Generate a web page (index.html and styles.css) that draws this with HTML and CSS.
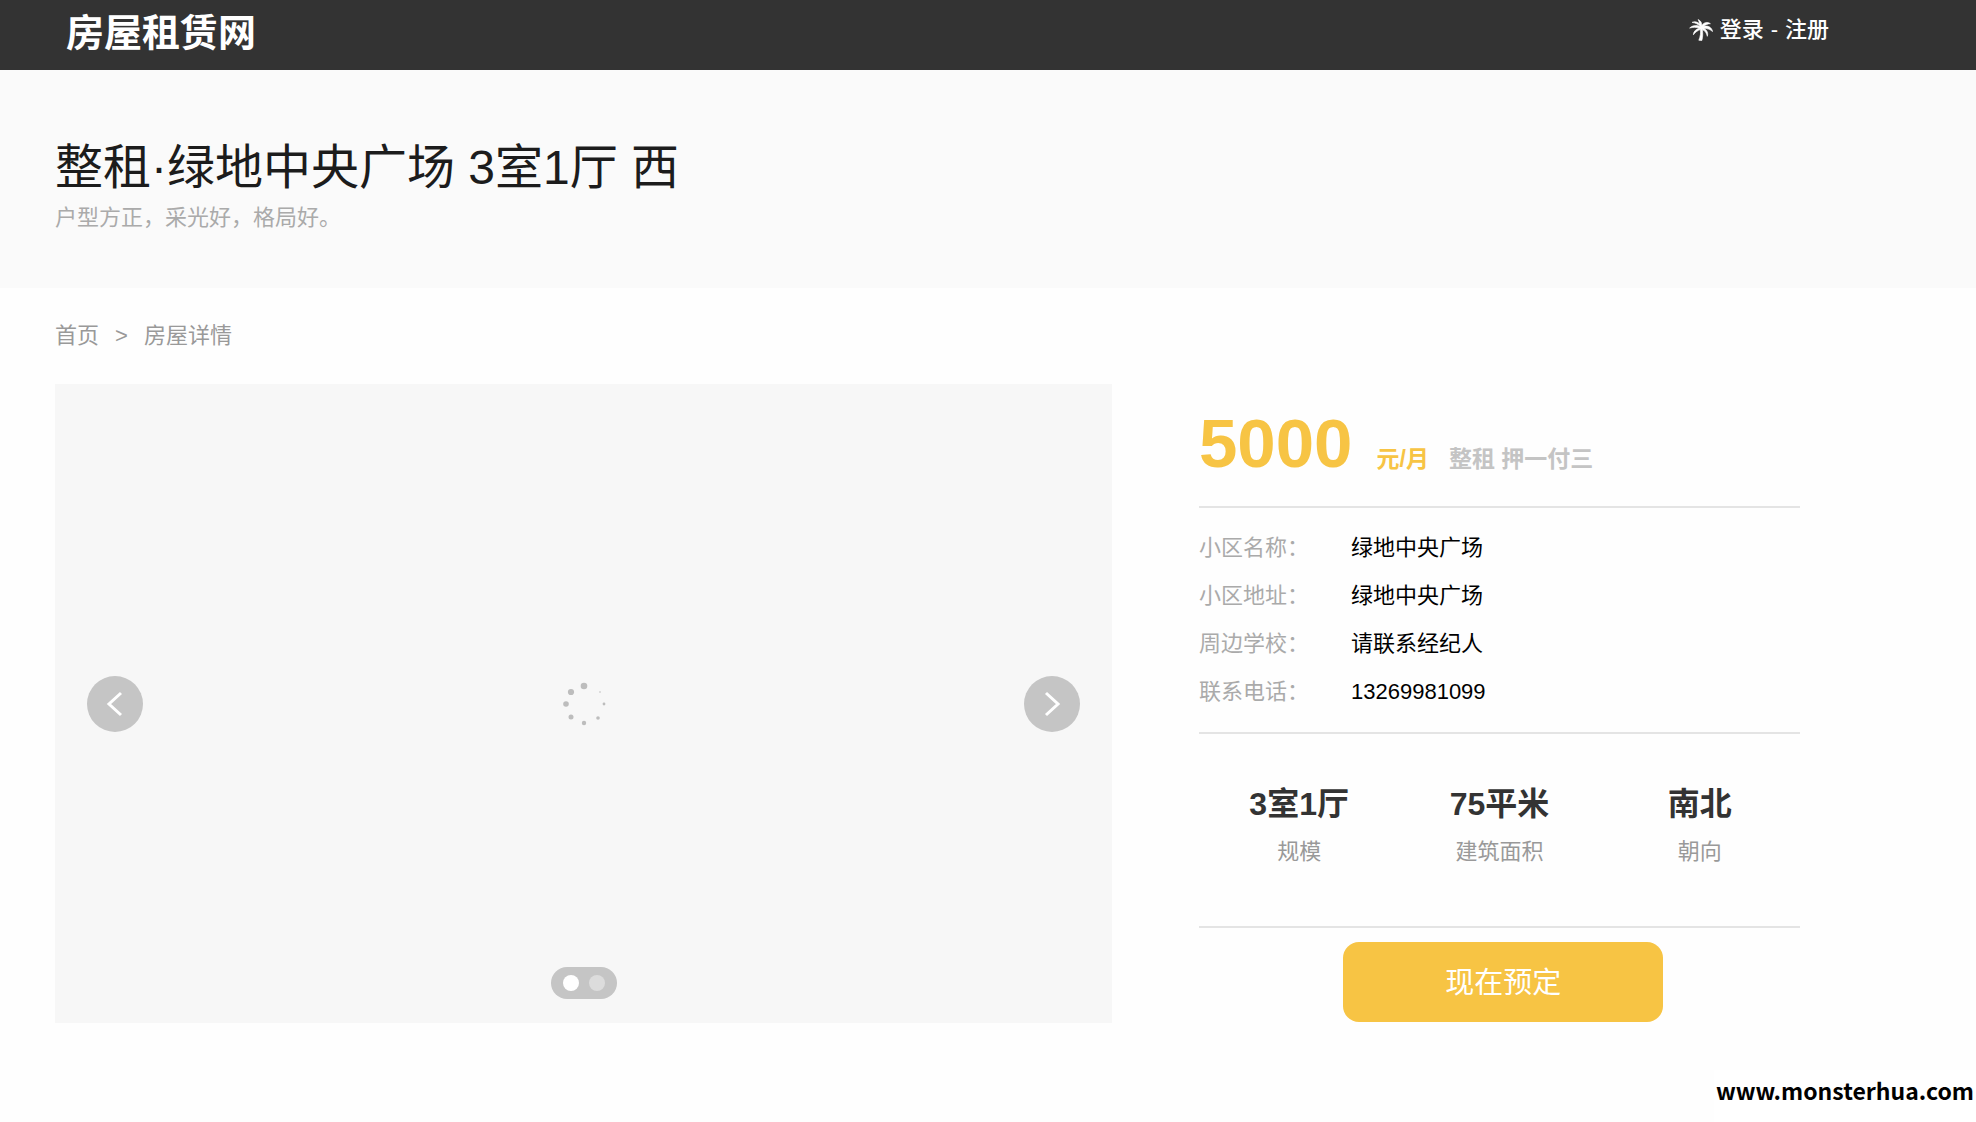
FILE: index.html
```html
<!DOCTYPE html>
<html lang="zh-CN">
  <head>
    <meta charset="UTF-8" />
    <meta name="viewport" content="width=device-width, initial-scale=1.0" />
    <title>房屋租赁网</title>
    <link rel="stylesheet" href="styles.css">
  </head>
  <body>
    <header class="header">
      <a class="logo" href="#">房屋租赁网</a>
      <div class="user">
        <svg class="palm" viewBox="0 0 22 20" aria-hidden="true">
          <path d="M10.6 7.2C8.4 5.6 4 5 .6 8.2c3.2-.9 6-.8 9.2.2C6.6 9 4.2 11 4 14.4c2-2.600 4-4 6.400-4.800C11 12.400 10.400 16 9 19.400l2.800.2c.9-3.400 1-6.800.4-10 2.400 1 4 3.200 4.600 6.200 1-3.200-.4-5.800-3-7 3.400-.4 5.600.8 7.800 2.600C21 7.600 17 5.400 13.400 6.800 15.200 5 17.200 4.200 19.600 4.200 16.800 2.200 13.600 3 11.800 5.800 11.800 3.400 10.600 1.400 8.400.4c.7 1.400 1.100 2.700 1.200 4C7.800 2.600 5.400 1.800 2.800 3 6 3.400 8.600 4.800 10.600 7.200z" />
        </svg>
        <a href="#">登录</a>
        <span>-</span>
        <a href="#">注册</a>
      </div>
    </header>
    <div class="intro">
      <h1>整租·绿地中央广场 3室1厅 西</h1>
      <p>户型方正，采光好，格局好。</p>
    </div>
    <div class="crumb">
      <a href="#">首页</a>
      <span>&gt;</span>
      <a href="#">房屋详情</a>
    </div>
    <main class="detail">
      <div class="gallery">
        <button type="button" class="arrow" aria-label="上一张">
          <svg viewBox="0 0 56 56"><path d="M34 17 22 28 34 39" /></svg>
        </button>
        <svg class="loading" viewBox="0 0 44 44">
          <circle cx="22" cy="4" r="3.3" />
          <circle cx="9" cy="10" r="3.1" />
          <circle cx="4" cy="22" r="2.8" />
          <circle cx="9" cy="35" r="2.5" />
          <circle cx="22" cy="41" r="2.2" />
          <circle cx="36" cy="36" r="1.8" />
          <circle cx="42" cy="22" r="1.4" />
          <circle cx="38" cy="10" r=".8" />
        </svg>
        <button type="button" class="arrow" aria-label="下一张">
          <svg viewBox="0 0 56 56"><path d="M22 17 34 28 22 39" /></svg>
        </button>
        <div class="dots">
          <button type="button" class="dot active" aria-label="1"></button>
          <button type="button" class="dot" aria-label="2"></button>
        </div>
      </div>
      <div class="info">
        <div class="price">
          <span class="total">5000</span>
          <span class="unit">元/月</span>
          <span class="way">整租 押一付三</span>
        </div>
        <dl class="about">
          <dt>小区名称：</dt>
          <dd>绿地中央广场</dd>
          <dt>小区地址：</dt>
          <dd>绿地中央广场</dd>
          <dt>周边学校：</dt>
          <dd>请联系经纪人</dd>
          <dt>联系电话：</dt>
          <dd>13269981099</dd>
        </dl>
        <div class="room">
          <div>
            <h3>3室1厅</h3>
            <p>规模</p>
          </div>
          <div>
            <h3>75平米</h3>
            <p>建筑面积</p>
          </div>
          <div>
            <h3>南北</h3>
            <p>朝向</p>
          </div>
        </div>
        <button type="button" class="order">现在预定</button>
      </div>
    </main>
    <div class="mark">www.monsterhua.com</div>
  </body>
</html>
```
FILE: styles.css
```css
* {
  box-sizing: border-box;
}
body {
  position: relative;
  min-height: 100vh;
  margin: 0;
  font-family: 'Liberation Sans', 'Noto Sans CJK SC', sans-serif;
  font-size: 22px;
  line-height: 40px;
  color: #000;
  background-color: #fefefe;
}
h1,
h3,
p,
dl,
dd {
  margin: 0;
}
a {
  color: inherit;
  text-decoration: none;
}
button {
  padding: 0;
  border: none;
  font-family: inherit;
  cursor: pointer;
}
/* header */
.header {
  display: flex;
  justify-content: space-between;
  height: 70px;
  padding: 0 147px 0 66px;
  color: #fff;
  background-color: #333;
}
.logo {
  font-size: 38px;
  font-weight: bold;
  line-height: 66px;
}
.user {
  display: flex;
  align-items: center;
  gap: 7px;
  height: 60px;
  font-weight: 500;
}
.palm {
  width: 24px;
  height: 22px;
  fill: #fff;
  stroke: #fff;
  stroke-width: 0.6;
}
.intro {
  padding: 68px 55px 50px;
  background-color: #fafafa;
}
.intro h1 {
  font-size: 48px;
  font-weight: normal;
  line-height: 60px;
  color: #1c1c1c;
}
.intro p {
  color: #aaa;
}
.crumb {
  display: flex;
  gap: 16px;
  padding: 28px 55px;
  color: #999;
}
/* detail */
.detail {
  display: grid;
  grid-template-columns: 1057fr 601fr;
  gap: 87px;
  padding: 0 176px 0 55px;
}
.gallery {
  position: relative;
  display: flex;
  justify-content: space-between;
  align-items: center;
  aspect-ratio: 1057 / 639;
  padding: 0 32px;
  background-color: #f7f7f7;
}
.arrow {
  width: 56px;
  height: 56px;
  border-radius: 50%;
  background-color: #c5c5c5;
}
.arrow svg {
  display: block;
  fill: none;
  stroke: #fff;
  stroke-width: 3;
}
.loading {
  width: 44px;
  height: 44px;
  fill: #bdbdbd;
}
.dots {
  position: absolute;
  bottom: 24px;
  left: 50%;
  display: flex;
  gap: 10px;
  padding: 8px 12px;
  border-radius: 16px;
  background-color: #c5c5c5;
  transform: translateX(-50%);
}
.dot {
  width: 16px;
  height: 16px;
  border-radius: 50%;
  background-color: #dcdcdc;
}
.dot.active {
  background-color: #fff;
}
.price {
  display: flex;
  align-items: baseline;
  height: 124px;
  padding-top: 18px;
  border-bottom: 2px solid #e4e4e4;
  font-size: 23px;
  font-weight: bold;
}
.total {
  font-size: 69px;
  line-height: 84px;
  color: #f7c444;
}
.unit {
  margin: 0 20px 0 24px;
  color: #f7c444;
}
.way {
  color: #c4c4c4;
}
.about {
  display: grid;
  grid-template-columns: 152px 1fr;
  padding: 16px 0;
  border-bottom: 2px solid #e4e4e4;
  line-height: 48px;
}
.about dt {
  color: #aaa;
}
.room {
  display: flex;
  padding: 44px 0 52px;
  border-bottom: 2px solid #e4e4e4;
  text-align: center;
}
.room div {
  flex: 1;
}
.room h3 {
  font-size: 32px;
  line-height: 52px;
  color: #333;
}
.room p {
  line-height: 44px;
  color: #999;
}
.order {
  display: block;
  width: 320px;
  height: 80px;
  margin: 14px 0 0 24%;
  padding-bottom: 4px;
  border-radius: 16px;
  font-size: 29px;
  color: #fff;
  background-color: #f7c444;
}
.mark {
  position: absolute;
  right: 0;
  bottom: 0;
  padding: 0 2px 12px;
  font-family: 'Noto Sans CJK SC', sans-serif;
  font-size: 23px;
  font-weight: bold;
  background-color: #fff;
}
```
